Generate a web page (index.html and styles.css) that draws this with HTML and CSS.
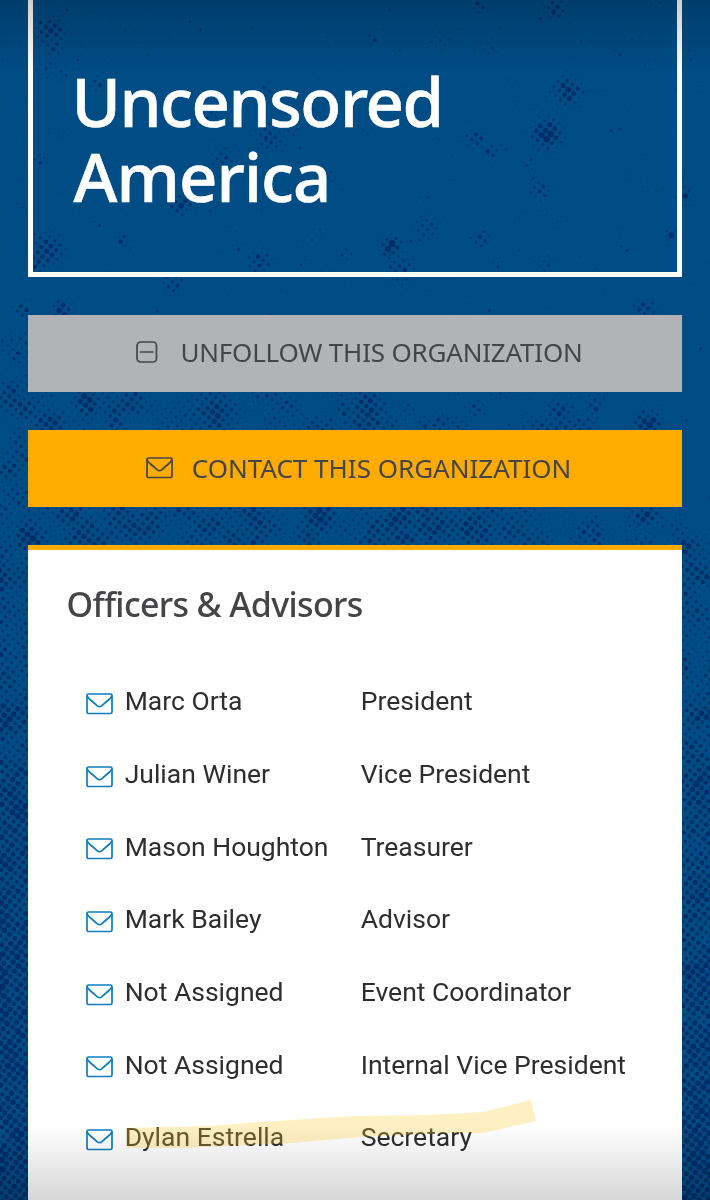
FILE: index.html
```html
<!DOCTYPE html>
<html lang="en">

<head>
    <meta charset="UTF-8">
    <meta name="viewport" content="width=device-width, initial-scale=1.0">
    <title>Uncensored America</title>
    <link rel="stylesheet" href="styles.css">
</head>

<body>
    <svg class="sprite" width="0" height="0">
        <symbol id="envelope" viewBox="0 0 28 22">
            <rect x="1" y="1" width="25" height="19.5" rx="1.6" />
            <path d="M1.3 3.2C2.4 5.8 5.2 7.7 7.6 9.5L11.3 12.8Q13.5 14.5 15.7 12.8L19.4 9.5C21.8 7.7 24.6 5.8 25.7 3.2" />
        </symbol>
        <symbol id="minus-square" viewBox="0 0 22 22">
            <rect x="1" y="1" width="19.5" height="20" rx="3.6" />
            <path d="M4.5 11H17" />
        </symbol>
    </svg>

    <canvas id="halftone" class="halftone" width="710" height="1200"></canvas>

    <main class="page">
        <header class="hero">
            <h1><span class="line1">Uncensored</span><br><span class="line2">America</span></h1>
        </header>

        <button class="btn btn-unfollow">
            <svg class="icon-minus"><use href="#minus-square" /></svg>
            <span>UNFOLLOW THIS ORGANIZATION</span>
        </button>
        <button class="btn btn-contact">
            <svg class="icon-mail"><use href="#envelope" /></svg>
            <span>CONTACT THIS ORGANIZATION</span>
        </button>

        <section class="card">
            <h2>Officers &amp; Advisors</h2>
            <ul class="officers">
                <li><svg class="icon-mail"><use href="#envelope" /></svg><span class="name">Marc Orta</span><span>President</span></li>
                <li><svg class="icon-mail"><use href="#envelope" /></svg><span class="name">Julian Winer</span><span>Vice President</span></li>
                <li><svg class="icon-mail"><use href="#envelope" /></svg><span class="name">Mason Houghton</span><span>Treasurer</span></li>
                <li><svg class="icon-mail"><use href="#envelope" /></svg><span class="name">Mark Bailey</span><span>Advisor</span></li>
                <li><svg class="icon-mail"><use href="#envelope" /></svg><span class="name">Not Assigned</span><span>Event Coordinator</span></li>
                <li><svg class="icon-mail"><use href="#envelope" /></svg><span class="name">Not Assigned</span><span>Internal Vice President</span></li>
                <li><svg class="icon-mail"><use href="#envelope" /></svg><span class="name">Dylan Estrella</span><span>Secretary</span></li>
            </ul>
        </section>
    </main>

    <svg class="marker" viewBox="0 0 412 50">
        <path d="M2 28 86 26 136 22 229 16 303 15 359 12 407 0 412 21 359 33 323 33 236 37 169 43 103 46 63 48 2 48Z" />
    </svg>
    <div class="shade shade-top"></div>
    <div class="shade shade-bottom"></div>

    <script src="script.js"></script>
</body>

</html>
```
FILE: styles.css
```css
* {
    box-sizing: border-box;
}

body {
    margin: 0;
    height: 1200px;
    position: relative;
    overflow: hidden;
    background-color: #004d86;
    font-family: Roboto, sans-serif;
}

.sprite {
    position: absolute;
}

.halftone {
    position: absolute;
    top: 0;
    left: 0;
}

.page {
    position: relative;
    height: 1200px;
    padding: 0 28.4px;
    display: flex;
    flex-direction: column;
}

.hero {
    height: 276.5px;
    flex: none;
    padding: 64px 40px 0;
    border: 5.5px solid #fff;
    border-top: none;
}

h1 {
    margin: 0;
    color: #fff;
    font-family: "Noto Sans", sans-serif;
    font-weight: 500;
    font-size: 67px;
    line-height: 75px;
    -webkit-text-stroke: 0.6px #fff;
}

.line1 {
    margin-left: -2px;
    letter-spacing: -1.4px;
}

.line2 {
    letter-spacing: -0.9px;
}

.btn {
    flex: none;
    height: 77px;
    margin-top: 38.4px;
    padding: 0 0 3px;
    border: none;
    display: flex;
    align-items: center;
    justify-content: center;
    color: #454547;
    font-family: "Noto Sans", sans-serif;
    font-size: 26px;
}

.btn-unfollow {
    padding-left: 9px;
    background-color: #b1b3b7;
    gap: 22px;
    letter-spacing: -0.2px;
}

.btn-contact {
    padding-left: 7px;
    padding-bottom: 2px;
    background-color: #ffab00;
    gap: 18px;
}

svg {
    fill: none;
    stroke: currentColor;
    stroke-width: 1.7;
    stroke-linecap: round;
}

.icon-mail {
    width: 28px;
    height: 22px;
}

.btn .icon-mail {
    margin-top: 1px;
}

.icon-minus {
    width: 22px;
    height: 22px;
}

.card {
    flex: 1;
    margin-top: 38.2px;
    padding: 29px 38px 0;
    background-color: #fff;
    border-top: 5px solid #ffab00;
}

h2 {
    margin: 0;
    color: #454547;
    font-family: "Noto Sans", sans-serif;
    font-weight: 500;
    font-size: 34px;
    line-height: 50px;
    letter-spacing: -0.65px;
}

.officers {
    margin: 35px 0 0;
    padding: 0 0 0 19.3px;
    list-style: none;
    color: #2e2e30;
    font-size: 26.5px;
}

.officers li {
    display: grid;
    grid-template-columns: 39px 236px 1fr;
    align-items: center;
    height: 72.7px;
    white-space: nowrap;
}

.officers .icon-mail {
    color: #0d7cc0;
    margin-top: 6px;
}

/* hand-drawn highlighter stroke over the last row */
.marker {
    position: absolute;
    left: 124px;
    top: 1100px;
    width: 412px;
    height: 50px;
    stroke: none;
    fill: rgba(255, 200, 40, 0.28);
}

.shade {
    position: absolute;
    left: 0;
    width: 100%;
    height: 75px;
}

.shade-top {
    top: 0;
    background: linear-gradient(rgba(0, 0, 0, 0.19), transparent);
}

.shade-bottom {
    bottom: 0;
    background: linear-gradient(transparent, rgba(0, 0, 0, 0.16));
}
```
FILE: script.js
```js
const ctx = document.getElementById("halftone").getContext("2d");

// dense patches: x, y, radius, strength
const patches = [
    [50, 30, 13, 1], [55, 47, 9, .6], [97, 84, 7, .7], [62, 72, 7, .5], [210, 115, 8, .6],
    [268, 137, 15, .6], [222, 158, 13, .5], [181, 203, 12, .75], [48, 250, 17, .8], [38, 263, 9, .8],
    [123, 240, 7, .7], [260, 262, 12, .7], [172, 284, 12, .6], [567, 92, 15, .85], [547, 134, 16, 1],
    [475, 139, 9, .8], [490, 152, 8, .6], [539, 190, 9, .8], [427, 228, 12, .6], [391, 247, 11, 1],
    [400, 270, 15, .65], [482, 238, 8, .8], [556, 7, 10, .8], [480, 6, 7, .7], [685, 196, 8, .8],
    [671, 235, 6, .8], [530, 163, 8, .4], [345, 255, 8, .5], [372, 39, 5, .7], [265, 90, 7, .4],
    [39, 161, 6, .6], [545, 262, 9, .4], [302, 264, 8, .3], [88, 402, 14, 1], [62, 309, 10, .9],
    [22, 311, 9, .7], [645, 308, 9, .8], [368, 407, 19, .9], [215, 412, 26, .75], [648, 423, 13, 1],
    [560, 412, 13, .8], [50, 424, 17, .9], [115, 420, 12, .7], [10, 395, 17, .7], [10, 470, 14, .7],
    [477, 408, 10, .6], [285, 408, 18, .5], [345, 410, 10, .7], [440, 425, 14, .6],
    [70, 515, 18, .8], [118, 513, 16, .8], [30, 537, 20, .9], [213, 525, 15, .7], [320, 516, 20, .9],
    [235, 540, 18, .7], [308, 538, 16, .7], [400, 515, 17, .9], [405, 540, 14, .9], [475, 530, 22, .85],
    [477, 528, 34, .6], [593, 532, 13, .7], [645, 515, 15, .8], [685, 550, 18, .8]
];

function rand(x, y) {
    const n = Math.sin(x * 127.1 + y * 311.7) * 43758.5453;
    return n - Math.floor(n);
}

function noise(x, y) {
    const i = Math.floor(x), j = Math.floor(y);
    const u = x - i, v = y - j;
    const top = rand(i, j) * (1 - u) + rand(i + 1, j) * u;
    const bottom = rand(i, j + 1) * (1 - u) + rand(i + 1, j + 1) * u;
    return top * (1 - v) + bottom * v;
}

function density(x, y) {
    let d = (noise(x / 10, y / 10) - 0.74) * 1.6;
    for (const [px, py, r, s] of patches) {
        const q = ((x - px) ** 2 + (y - py) ** 2) / (r * r);
        d = Math.max(d, s * Math.exp(-q * 1.1));
    }
    // the dots close up towards the bottom, a little later on the right
    const start = x > 600 ? 460 : 330;
    const fade = Math.min(1, Math.max(0, (y - start) / 600));
    const grain = noise(x / 17 + 40, y / 17) - 0.5;
    if (y > start) {
        d = Math.max(d, Math.sqrt(fade) * 0.92 - 0.12 + grain * 1.1 * (1 - fade * 0.7));
    }
    return d;
}

ctx.fillStyle = "#002a66";
for (let i = -100; i < 320; i++) {
    for (let j = -140; j < 260; j++) {
        const x = i * 5.2 - j * 4;
        const y = i * 4 + j * 5.2;
        if (x < -5 || x > 715 || y < -5 || y > 1205) continue;
        const d = density(x, y) * (0.7 + rand(i, j) * 0.6);
        if (d < 0.08) continue;
        ctx.globalAlpha = Math.min(0.88, 0.25 + d);
        ctx.beginPath();
        ctx.arc(x, y, 0.6 + Math.min(1.1, d) * 2.4, 0, Math.PI * 2);
        ctx.fill();
    }
}
```
